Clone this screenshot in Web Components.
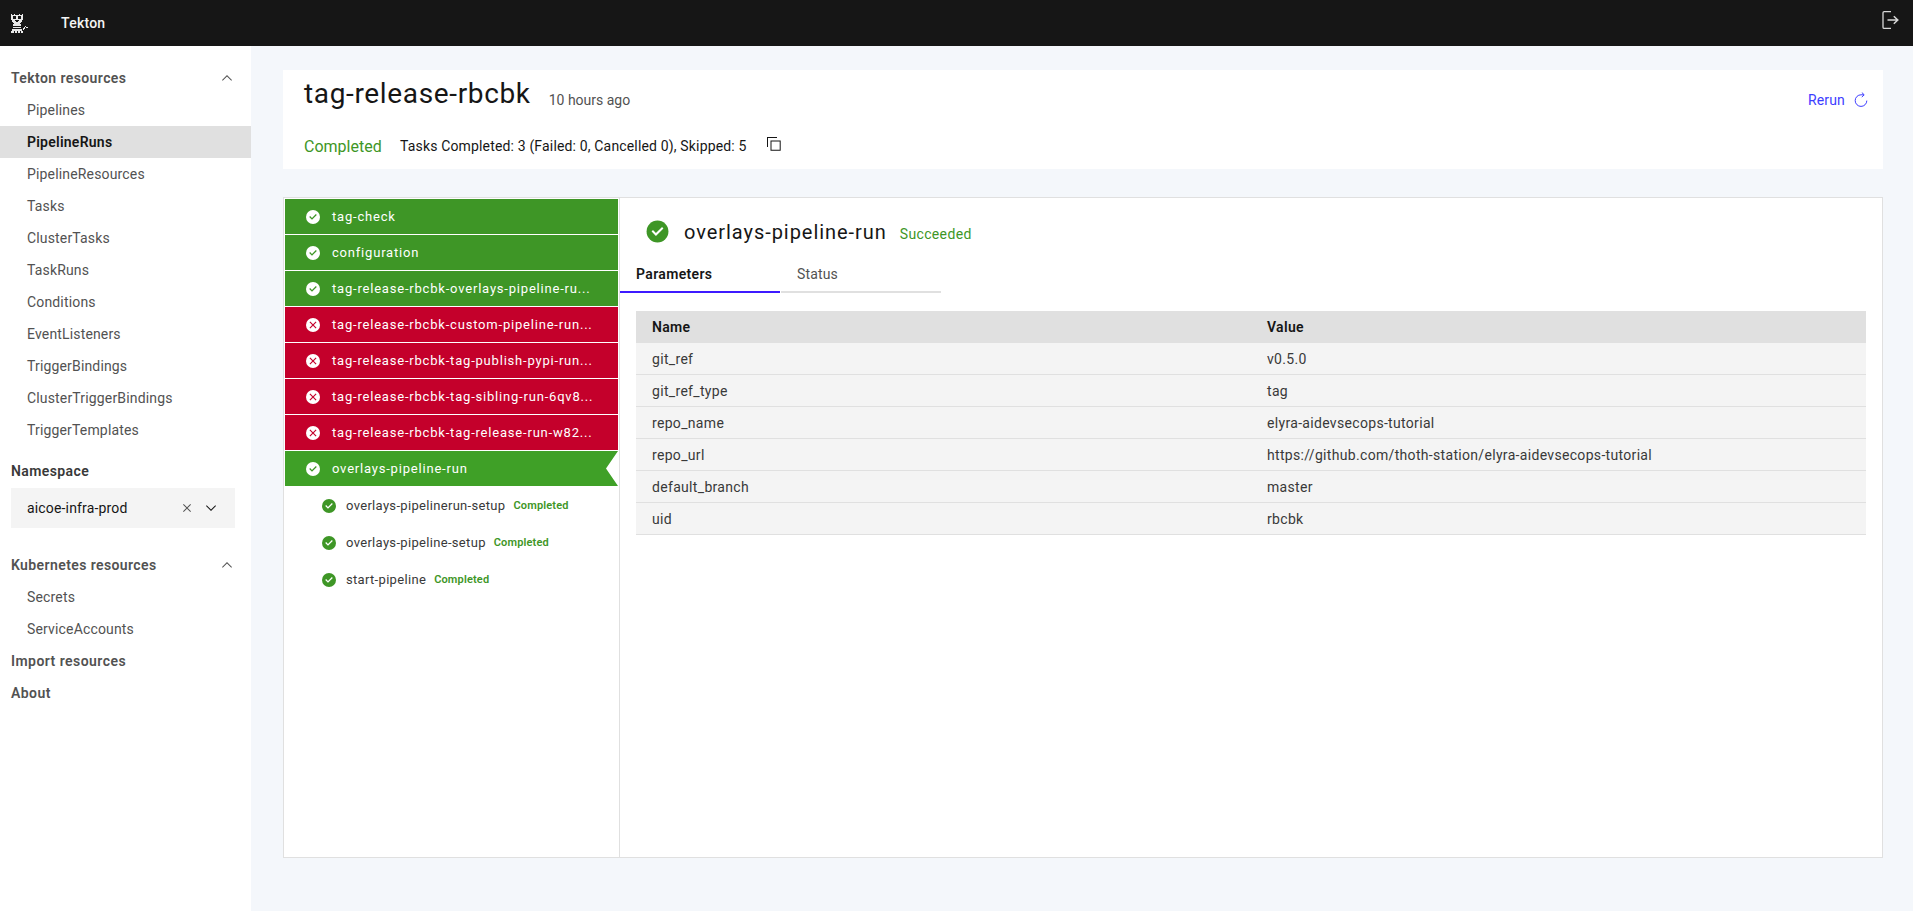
<!doctype html>
<html><head><meta charset="utf-8"><style>
html,body{margin:0;height:100%;overflow:hidden}
body{font-family:Roboto,"Liberation Sans",sans-serif;font-size:14px;color:#161616;background:#f4f7fb}
</style></head><body>
<tk-app></tk-app>
<script>
const CHECK='<path fill="currentColor" d="M8 1a7 7 0 1 0 0 14A7 7 0 0 0 8 1z"/><path fill="var(--mark,#fff)" d="M7 10.8 4.2 8l.9-.9L7 9l3.9-3.9.9.9z"/>';
const CROSS='<path fill="currentColor" d="M8 1a7 7 0 1 0 0 14A7 7 0 0 0 8 1z"/><path fill="var(--mark,#fff)" d="M10.7 11.5 8 8.8l-2.7 2.7-.8-.8L7.2 8 4.5 5.3l.8-.8L8 7.2l2.7-2.7.8.8L8.8 8l2.7 2.7z"/>';
function def(name,css,html){
  customElements.define(name,class extends HTMLElement{
    connectedCallback(){
      if(this.shadowRoot)return;
      const s=this.attachShadow({mode:'open'});
      const get=k=>this.getAttribute(k)||'';
      s.innerHTML='<style>'+css+'</style>'+(typeof html==='function'?html(get,this):html);
    }
  });
}
def('tk-header',`:host{display:flex;align-items:center;height:46px;background:#161616;color:#f4f4f4}
.logo{width:24px;height:24px;margin-left:8px;margin-top:-2px;flex:none}
.name{margin-left:29px;font-size:14px;font-weight:500;letter-spacing:.25px;flex:1}
.out{width:20px;height:20px;margin-right:12px;margin-top:-6px;color:#d8d8d8}`,
`<svg class="logo" viewBox="0 0 24 24" shape-rendering="crispEdges">
<g fill="#e8e8e8"><path d="M3 4h1v1h2v-1h1v1h4v-1h1v1h2v-1h1v6h-1v2h-1v1h-1v1h-6v-1h-1v-1h-1v-2h-1z"/><rect x="5" y="14" width="8" height="2"/><rect x="5" y="17" width="8" height="1"/><rect x="4" y="19" width="10" height="2"/><rect x="3" y="21" width="3" height="2"/><rect x="7" y="21" width="2" height="2"/><rect x="10" y="21" width="2" height="2"/><rect x="13" y="21" width="2" height="2"/><rect x="15" y="18" width="1" height="2"/><rect x="16" y="17" width="1" height="2"/><rect x="17" y="16" width="1" height="1"/><rect x="18" y="17" width="2" height="1"/></g>
<g fill="#161616"><rect x="5" y="6" width="3" height="3"/><rect x="10" y="6" width="3" height="3"/><rect x="7" y="10" width="4" height="1"/><rect x="8" y="11" width="2" height="1"/></g></svg>
<span class="name">Tekton</span>
<svg class="out" viewBox="0 0 20 20" fill="none" stroke="currentColor" stroke-width="1.3"><path d="M10 1.6H3.2a1.2 1.2 0 0 0-1.2 1.2v14.4a1.2 1.2 0 0 0 1.2 1.2H10"/><path d="M6.5 10h9.8M12.8 6.2l4 3.8-4 3.8" stroke-width="1.5"/></svg>`);
const chev=`<svg width="16" height="16" viewBox="0 0 16 16" fill="currentColor"><path d="M8 5l5 5-.7.7L8 6.4 3.7 10.7 3 10z"/></svg>`;
def('tk-nav-group',`:host{display:block;color:#525252}
.h{display:flex;align-items:center;justify-content:space-between;height:32px;padding:0 16px 0 11px;font-weight:600;letter-spacing:.4px;color:#525252}
svg{display:block}`,
g=>`<div class="h"><span>${g('label')}</span>${chev}</div><slot></slot>`);
def('tk-nav-item',`:host{display:flex;align-items:center;height:32px;padding-left:27px;letter-spacing:.16px;color:#525252}
:host([selected]){background:#e0e0e0;color:#161616;font-weight:600;letter-spacing:.25px}
:host([top]){padding-left:11px;font-weight:600;letter-spacing:.45px}`,`<slot></slot>`);
def('tk-namespace',`:host{display:block}
.l{height:32px;display:flex;align-items:center;padding-left:11px;font-weight:600;letter-spacing:.4px;color:#393939}
.b{margin:1px 16px 0 11px;height:40px;background:#f4f4f4;display:flex;align-items:center;padding-left:16px;letter-spacing:.16px;color:#161616}
.t{flex:1}.i{display:block;color:#525252}`,
`<div class="l">Namespace</div><div class="b"><span class="t">aicoe-infra-prod</span>
<svg class="i" style="margin-right:8px" width="16" height="16" viewBox="0 0 16 16" fill="currentColor"><path d="M12 4.7l-.7-.7L8 7.3 4.7 4l-.7.7L7.3 8 4 11.3l.7.7L8 8.7l3.3 3.3.7-.7L8.7 8z"/></svg>
<svg class="i" style="margin-right:16px;color:#161616" width="16" height="16" viewBox="0 0 16 16" fill="currentColor"><path d="M8 11L3 6l.7-.7L8 9.6l4.3-4.3.7.7z"/></svg></div>`);
def('tk-sidenav',`:host{display:block;background:#fff;padding-top:16px}`,`<slot></slot>`);
def('tk-run-header',`:host{display:block;background:#fff;height:99px;padding:0 14px 0 21px;box-sizing:border-box}
.a{display:flex;align-items:center;height:54px}
h1{margin:0 0 7px;font-size:28px;font-weight:400;letter-spacing:.65px;color:#161616}
.ago{margin-left:18px;margin-top:6px;color:#525252;letter-spacing:0;flex:1}
.re{display:flex;align-items:center;color:#3d3dff;letter-spacing:.16px;gap:8px;margin-top:6px}
.b{display:flex;align-items:center;height:44px}
.c{color:#3e9626;font-size:16px;letter-spacing:0;width:96px}
.tx{letter-spacing:.16px}
.cp{margin-left:19px;margin-top:-4px;color:#161616}svg{display:block}`,
`<div class="a"><h1>tag-release-rbcbk</h1><span class="ago">10 hours ago</span>
<span class="re">Rerun <svg width="16" height="16" viewBox="0 0 16 16" fill="none" stroke="currentColor"><path d="M13.8 8.6A5.8 5.8 0 1 1 8 2.8h2.8"/><path d="M8.8 .5 11.2 2.8 8.8 5.1"/></svg></span></div>
<div class="b"><span class="c">Completed</span><span class="tx">Tasks Completed: 3 (Failed: 0, Cancelled 0), Skipped: 5</span>
<svg class="cp" width="16" height="16" viewBox="0 0 16 16" fill="currentColor"><path d="M1 1h10v1H2v9H1z"/><path d="M4.5 4.5h10.2v10.2H4.5zm1 1v8.2h8.2V5.5z"/></svg></div>`);
def('tk-task',`:host{display:flex;align-items:center;height:35px;margin-bottom:1px;padding-left:20px;color:#fff;letter-spacing:.8px;font-size:13px;background:#3e9626}
:host([failed]){background:#c4002b}
:host([active]){background:#3fa027;clip-path:polygon(0 0,100% 0,calc(100% - 12px) 50%,100% 100%,0 100%)}
svg{flex:none;color:#fff;--mark:#3e9626;margin-right:11px}
:host([failed]) svg{--mark:#c4002b}
span{white-space:nowrap}`,
(g,el)=>`<svg width="16" height="16" viewBox="0 0 16 16">${el.hasAttribute('failed')?CROSS:CHECK}</svg><span><slot></slot></span>`);
def('tk-step',`:host{display:flex;align-items:center;height:37px;padding-left:36px;color:#393939;letter-spacing:.32px;font-size:13px}
svg{flex:none;color:#3e9626;margin-right:9px}
b{margin-left:8px;color:#3e9626;font-size:11px;font-weight:600;letter-spacing:.15px}`,
`<svg width="16" height="16" viewBox="0 0 16 16">${CHECK}</svg><span><slot></slot></span><b>Completed</b>`);
def('tk-tasks',`:host{display:block;width:336px;flex:none;border-right:1px solid #e0e0e0;padding:1px 1px 0 1px;box-sizing:border-box}`,`<slot></slot>`);
def('tk-details',`:host{display:block;flex:1;min-width:0}
.t{display:flex;align-items:center;height:67px;padding:0 0 2px 25px;box-sizing:border-box;margin-top:1px}
.t svg{color:#3e9626;margin-right:14px}
h2{margin:0;font-size:20px;font-weight:400;letter-spacing:.95px;color:#161616}
.s{margin-left:13px;color:#3e9626;letter-spacing:.35px;margin-top:4px}
.tabs{display:flex;gap:1px;height:27px;align-items:flex-start}
.tab{height:25px;border-bottom:2px solid #e0e0e0;padding-left:16px;box-sizing:content-box;color:#525252;letter-spacing:.16px;width:144px}
.tab.on{border-color:#3d1aff;color:#161616;font-weight:600;letter-spacing:.35px}
.c{padding:18px 16px 0 16px}`,
`<div class="t"><svg width="25" height="25" viewBox="0 0 16 16">${CHECK}</svg><h2>overlays-pipeline-run</h2><span class="s">Succeeded</span></div>
<div class="tabs"><div class="tab on">Parameters</div><div class="tab">Status</div></div>
<div class="c"><slot></slot></div>`);
def('tk-row',`:host{display:grid;grid-template-columns:615px 1fr;height:32px;align-items:center;box-sizing:border-box;background:#f4f4f4;border-bottom:1px solid #e0e0e0;color:#393939;letter-spacing:.32px;padding-top:1px}
:host([head]){background:#e0e0e0;border:0;color:#161616;font-weight:600;padding-top:0}
div{padding-left:16px}`,g=>`<div>${g('a')}</div><div>${g('b')}</div>`);
def('tk-panel',`:host{display:flex;height:661px;margin-top:28px;background:#fff;border:1px solid #e0e0e0;box-sizing:border-box}`,`<slot></slot>`);
def('tk-main',`:host{display:block;padding:24px 30px 0 32px;background:#f4f7fb;min-width:0}`,`<slot></slot>`);
def('tk-app',`:host{display:grid;grid-template-columns:251px 1fr;grid-template-rows:46px 865px;height:911px}
tk-header{grid-column:1/3}`,
`<tk-header></tk-header>
<tk-sidenav>
<tk-nav-group label="Tekton resources"><tk-nav-item>Pipelines</tk-nav-item><tk-nav-item selected>PipelineRuns</tk-nav-item><tk-nav-item>PipelineResources</tk-nav-item><tk-nav-item>Tasks</tk-nav-item><tk-nav-item>ClusterTasks</tk-nav-item><tk-nav-item>TaskRuns</tk-nav-item><tk-nav-item>Conditions</tk-nav-item><tk-nav-item>EventListeners</tk-nav-item><tk-nav-item>TriggerBindings</tk-nav-item><tk-nav-item>ClusterTriggerBindings</tk-nav-item><tk-nav-item>TriggerTemplates</tk-nav-item></tk-nav-group>
<tk-namespace style="margin-top:9px"></tk-namespace>
<tk-nav-group style="margin-top:21px" label="Kubernetes resources"><tk-nav-item>Secrets</tk-nav-item><tk-nav-item>ServiceAccounts</tk-nav-item></tk-nav-group>
<tk-nav-item top>Import resources</tk-nav-item><tk-nav-item top>About</tk-nav-item>
</tk-sidenav>
<tk-main><tk-run-header></tk-run-header>
<tk-panel><tk-tasks>
<tk-task>tag-check</tk-task><tk-task>configuration</tk-task><tk-task>tag-release-rbcbk-overlays-pipeline-ru...</tk-task>
<tk-task failed>tag-release-rbcbk-custom-pipeline-run...</tk-task><tk-task failed>tag-release-rbcbk-tag-publish-pypi-run...</tk-task><tk-task failed>tag-release-rbcbk-tag-sibling-run-6qv8...</tk-task><tk-task failed>tag-release-rbcbk-tag-release-run-w82...</tk-task>
<tk-task active>overlays-pipeline-run</tk-task>
<tk-step>overlays-pipelinerun-setup</tk-step><tk-step>overlays-pipeline-setup</tk-step><tk-step>start-pipeline</tk-step>
</tk-tasks>
<tk-details>
<tk-row head a="Name" b="Value"></tk-row>
<tk-row a="git_ref" b="v0.5.0"></tk-row><tk-row a="git_ref_type" b="tag"></tk-row><tk-row a="repo_name" b="elyra-aidevsecops-tutorial"></tk-row><tk-row a="repo_url" b="https://github.com/thoth-station/elyra-aidevsecops-tutorial"></tk-row><tk-row a="default_branch" b="master"></tk-row><tk-row a="uid" b="rbcbk"></tk-row>
</tk-details></tk-panel></tk-main>`);
</script></body></html>
